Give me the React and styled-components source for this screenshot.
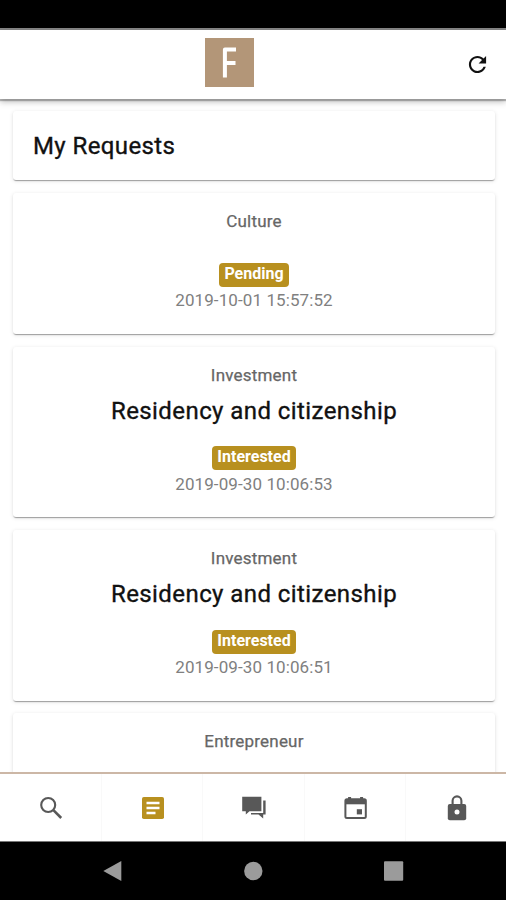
import styled, { createGlobalStyle } from "styled-components";
import { IoMdRefresh } from "react-icons/io";

const colors = {
  gold: "#b8901f",
  tan: "#b39678",
  navLine: "#ccb7a6",
  icon: "#585858",
  system: "#9b9b9b",
};

const requests = [
  { id: 4, category: "Culture", status: "Pending", date: "2019-10-01 15:57:52" },
  {
    id: 3,
    category: "Investment",
    title: "Residency and citizenship",
    status: "Interested",
    date: "2019-09-30 10:06:53",
  },
  {
    id: 2,
    category: "Investment",
    title: "Residency and citizenship",
    status: "Interested",
    date: "2019-09-30 10:06:51",
  },
  { id: 1, category: "Entrepreneur" },
];

const SearchIcon = () => (
  <svg width="30" height="30" viewBox="0 0 30 30">
    <g fill="none" stroke="currentColor">
      <circle cx="11.2" cy="12" r="7" strokeWidth="2.1" />
      <path d="M16.4 17.2L24.2 25" strokeWidth="2.6" />
    </g>
  </svg>
);

const ListIcon = () => (
  <svg width="30" height="30" viewBox="0 0 30 30">
    <rect x="4" y="4" width="22" height="22" rx="1.8" fill="currentColor" />
    <path
      d="M8.5 10H21.5M8.5 15H21.5M8.5 20H17.5"
      stroke="#fff"
      strokeWidth="2.4"
    />
  </svg>
);

const ChatIcon = () => (
  <svg width="30" height="30" viewBox="0 0 30 30" fill="currentColor">
    <path d="M3.2 3.8H22.4V18.2H10.5L6.8 21.6V18.2H3.2Z" />
    <path d="M24.2 7.6H26.6V21.4H24.2V25.6L19.5 21.4H12V20H24.2Z" />
  </svg>
);

const CalendarIcon = () => (
  <svg width="30" height="30" viewBox="0 0 30 30">
    <rect
      x="4.4"
      y="6.3"
      width="20.4"
      height="18.7"
      rx="1.5"
      fill="none"
      stroke="currentColor"
      strokeWidth="2"
    />
    <g fill="currentColor">
      <path d="M4.1 6H25.1V11.3H4.1Z" />
      <path d="M7.1 4H10.1V7H7.1ZM19.1 4H22.1V7H19.1Z" />
      <path d="M15.8 16.2H21V21.4H15.8Z" />
    </g>
  </svg>
);

const LockIcon = () => (
  <svg width="30" height="30" viewBox="0 0 30 30">
    <path
      d="M10.6 11.5V7.8A4.4 4.4 0 0 1 19.4 7.8V11.5"
      fill="none"
      stroke="currentColor"
      strokeWidth="2.1"
    />
    <rect x="5.8" y="11" width="18.4" height="16.2" rx="2" fill="currentColor" />
    <circle cx="15" cy="19.1" r="2.5" fill="#fff" />
  </svg>
);

const tabs = [
  { name: "Search", Icon: SearchIcon },
  { name: "Requests", Icon: ListIcon, active: true },
  { name: "Messages", Icon: ChatIcon },
  { name: "Calendar", Icon: CalendarIcon },
  { name: "Account", Icon: LockIcon },
];

const App = () => {
  return (
    <>
      <GlobalStyle />
      <Screen>
        <StatusBar />
        <Header>
          <Logo viewBox="0 0 49 49" role="img" aria-label="Logo">
            <rect width="49" height="49" fill={colors.tan} />
            <path
              d="M31 11.6H19.9V39.5M20 25H30.5"
              fill="none"
              stroke="#fff"
              strokeWidth="4"
              strokeLinejoin="round"
            />
          </Logo>
          <RefreshButton aria-label="Refresh">
            <IoMdRefresh size={25} />
          </RefreshButton>
        </Header>
        <Content>
          <TitleCard>
            <h1>My Requests</h1>
          </TitleCard>
          {requests.map((item) => (
            <RequestCard key={item.id}>
              <Category>{item.category}</Category>
              <RequestTitle>{item.title}</RequestTitle>
              {item.status && <Badge>{item.status}</Badge>}
              {item.date && <Time>{item.date}</Time>}
            </RequestCard>
          ))}
        </Content>
        <TabBar>
          {tabs.map(({ name, Icon, active }) => (
            <Tab key={name} aria-label={name} $active={active}>
              <Icon />
            </Tab>
          ))}
        </TabBar>
        <SystemBar>
          <svg width="20" height="22" viewBox="0 0 20 22">
            <path d="M0.3 11L18.3 1V21Z" />
          </svg>
          <svg width="20" height="20" viewBox="0 0 20 20">
            <circle cx="10.3" cy="10" r="9.2" />
          </svg>
          <svg width="20" height="20" viewBox="0 0 20 20">
            <rect x="0" y="0.3" width="19.2" height="19.4" rx="1" />
          </svg>
        </SystemBar>
      </Screen>
    </>
  );
};

export default App;

const GlobalStyle = createGlobalStyle`
  * {
    box-sizing: border-box;
  }

  body {
    margin: 0;
    font-family: Roboto, "Liberation Sans", sans-serif;
    background: #fff;
  }

  h1, h2, p {
    margin: 0;
  }

  button {
    border: 0;
    padding: 0;
    background: none;
  }
`;

const Screen = styled.div`
  height: 900px;
  display: flex;
  flex-direction: column;
  overflow: hidden;
`;

const StatusBar = styled.div`
  flex: 0 0 30px;
  background: #000;
  border-bottom: 2px solid #858585;
`;

const Header = styled.header`
  flex: 0 0 69px;
  display: grid;
  grid-template-columns: 1fr 49px 1fr;
  align-items: center;
  padding: 0 16px 5px 0;
  background: #fff;
  box-shadow: 0 2px 1px rgba(0, 0, 0, 0.25), 0 3px 6px rgba(0, 0, 0, 0.25);
  z-index: 1;
`;

const Logo = styled.svg`
  grid-column: 2;
  width: 49px;
  height: 49px;
  margin-left: -16px;
`;

const RefreshButton = styled.button`
  justify-self: end;
  display: flex;
  padding-top: 5px;
  color: #111;
`;

const Content = styled.main`
  flex: 1;
  min-height: 0;
  overflow: hidden;
  display: flex;
  flex-direction: column;
  gap: 12.9px;
  padding: 12.4px 11px 0 13px;
`;

const Card = styled.section`
  flex-shrink: 0;
  background: #fff;
  border-radius: 3px;
  box-shadow: 0 2px 1px -1px rgba(0, 0, 0, 0.24),
    0 1px 1px rgba(0, 0, 0, 0.12), 0 1px 4px rgba(0, 0, 0, 0.12);
`;

const TitleCard = styled(Card)`
  height: 69px;
  display: flex;
  align-items: center;
  padding: 1px 20px 0;

  h1 {
    font-size: 24px;
    font-weight: 400;
    letter-spacing: 0.4px;
    color: #111;
    -webkit-text-stroke: 0.35px #111;
  }
`;

const RequestCard = styled(Card)`
  display: flex;
  flex-direction: column;
  align-items: center;
  padding: 18px 16px 22.5px;
`;

const Category = styled.p`
  font-size: 17px;
  line-height: 20px;
  font-weight: 400;
  letter-spacing: 0.2px;
  color: #666;
  -webkit-text-stroke: 0.25px #666;
`;

const RequestTitle = styled.h2`
  height: 30px;
  min-height: 0;
  margin: 11px 0 20.5px;
  font-size: 24px;
  line-height: 30px;
  font-weight: 400;
  letter-spacing: 0.42px;
  color: #111;
  -webkit-text-stroke: 0.35px #111;

  &:empty {
    height: 0;
  }
`;

const Badge = styled.span`
  height: 24px;
  padding: 0 5px;
  border-radius: 4px;
  font-size: 16px;
  line-height: 22px;
  font-weight: 700;
  color: #fff;
  background: ${colors.gold};
`;

const Time = styled.p`
  margin-top: 3.5px;
  font-size: 17px;
  line-height: 21px;
  letter-spacing: 0.1px;
  color: #808080;
`;

const TabBar = styled.nav`
  flex: 0 0 69px;
  display: grid;
  grid-template-columns: repeat(5, 1fr);
  border-top: 2px solid ${colors.navLine};
  background: #fff;
  z-index: 1;
`;

const Tab = styled.button`
  display: flex;
  align-items: center;
  justify-content: center;
  padding: 1px 0 0 2px;
  color: ${(props) => (props.$active ? colors.gold : colors.icon)};

  & + & {
    border-left: 1px solid #f9f9f9;
  }
`;

const SystemBar = styled.footer`
  flex: 0 0 59px;
  display: flex;
  justify-content: center;
  align-items: center;
  gap: 120.5px;
  background: #000;
  border-top: 1px solid #777;
  fill: ${colors.system};
`;
